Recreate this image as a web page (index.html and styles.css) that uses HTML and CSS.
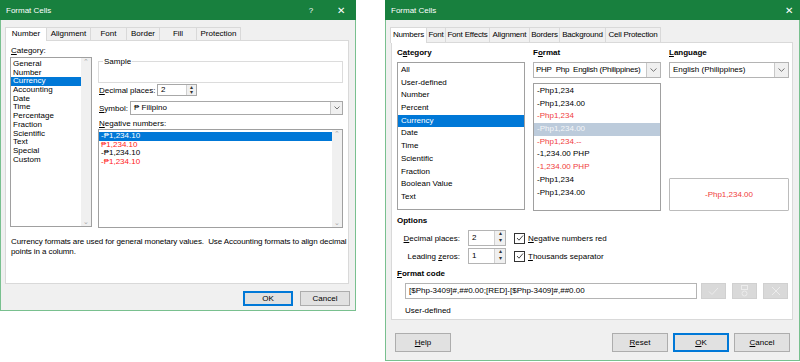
FILE: index.html
```html
<!DOCTYPE html>
<html lang="en">
<head>
  <meta charset="UTF-8" />
  <title>Format Cells</title>
  <link rel="stylesheet" href="styles.css">
</head>
<body>

  <!-- Excel dialog -->
  <div class="dlg xl">
    <div class="title">
      <span>Format Cells</span>
      <span class="ctl"><span class="q">?</span><span class="x">✕</span></span>
    </div>
    <div class="tabs">
      <div class="tab on" style="width:42px">Number</div>
      <div class="tab" style="width:45px">Alignment</div>
      <div class="tab" style="width:37px">Font</div>
      <div class="tab" style="width:34px">Border</div>
      <div class="tab" style="width:38px">Fill</div>
      <div class="tab" style="width:45px">Protection</div>
    </div>
    <div class="panel">
      <div class="xl-cols">
        <div>
          <div class="lbl"><u>C</u>ategory:</div>
          <div class="list cat-list">
            <div class="rows">
              <div>General</div>
              <div>Number</div>
              <div class="sel">Currency</div>
              <div>Accounting</div>
              <div>Date</div>
              <div>Time</div>
              <div>Percentage</div>
              <div>Fraction</div>
              <div>Scientific</div>
              <div>Text</div>
              <div>Special</div>
              <div>Custom</div>
            </div>
            <div class="sbar"><span>&#8963;</span><span>&#8964;</span></div>
          </div>
        </div>
        <div>
          <fieldset class="sample"><legend>Sample</legend></fieldset>
          <div class="field dec">
            <span class="flbl"><u>D</u>ecimal places:</span>
            <div class="spin"><span class="val">2</span><span class="arrows"><i>&#9652;</i><i>&#9662;</i></span></div>
          </div>
          <div class="field sym">
            <span class="flbl sym-lbl"><u>S</u>ymbol:</span>
            <div class="combo"><span class="val">₱ Filipino</span><span class="drop"><svg width="6" height="4" viewBox="0 0 6 4"><path d="M0.5 0.5 L3 3 L5.5 0.5" fill="none" stroke="#555" stroke-width="0.8"/></svg></span></div>
          </div>
          <div class="lbl neg-lbl"><u>N</u>egative numbers:</div>
          <div class="list neg-list">
            <div class="rows">
              <div class="sel">-₱1,234.10</div>
              <div class="red">₱1,234.10</div>
              <div>-₱1,234.10</div>
              <div class="red">-₱1,234.10</div>
            </div>
            <div class="sbar"><span>&#8963;</span><span>&#8964;</span></div>
          </div>
        </div>
      </div>
      <p class="desc">Currency formats are used for general monetary values.&nbsp; Use Accounting formats to align decimal<br>points in a column.</p>
    </div>
    <div class="btns">
      <button class="btn def">OK</button>
      <button class="btn">Cancel</button>
    </div>
  </div>

  <!-- LibreOffice dialog -->
  <div class="dlg lo">
    <div class="title">
      <span>Format Cells</span>
      <span class="ctl"><span class="x">✕</span></span>
    </div>
    <div class="tabs">
      <div class="tab on" style="width:37px">Numbers</div>
      <div class="tab" style="width:20px">Font</div>
      <div class="tab" style="width:45px">Font Effects</div>
      <div class="tab" style="width:41px">Alignment</div>
      <div class="tab" style="width:31px">Borders</div>
      <div class="tab" style="width:47px">Background</div>
      <div class="tab" style="width:56px">Cell Protection</div>
    </div>
    <div class="panel">
      <div class="lo-cols">
        <div>
          <div class="head">C<u>a</u>tegory</div>
          <div class="list lo-cat">
            <div>All</div>
            <div>User-defined</div>
            <div>Number</div>
            <div>Percent</div>
            <div class="sel">Currency</div>
            <div>Date</div>
            <div>Time</div>
            <div>Scientific</div>
            <div>Fraction</div>
            <div>Boolean Value</div>
            <div>Text</div>
          </div>
        </div>
        <div>
          <div class="head">F<u>o</u>rmat</div>
          <div class="combo lo-combo"><span class="val tight">PHP&nbsp; Php&nbsp; English (Philippines)</span><span class="drop"><svg width="7" height="4" viewBox="0 0 7 4"><path d="M0.5 0.5 L3.5 3.3 L6.5 0.5" fill="none" stroke="#555" stroke-width="0.8"/></svg></span></div>
          <div class="list lo-fmt">
            <div>-Php1,234</div>
            <div>-Php1,234.00</div>
            <div class="red">-Php1,234</div>
            <div class="hl">-Php1,234.00</div>
            <div class="red">-Php1,234.--</div>
            <div>-1,234.00 PHP</div>
            <div class="red">-1,234.00 PHP</div>
            <div>-Php1,234</div>
            <div>-Php1,234.00</div>
          </div>
        </div>
        <div>
          <div class="head"><u>L</u>anguage</div>
          <div class="combo lo-combo"><span class="val">English (Philippines)</span><span class="drop"><svg width="7" height="4" viewBox="0 0 7 4"><path d="M0.5 0.5 L3.5 3.3 L6.5 0.5" fill="none" stroke="#555" stroke-width="0.8"/></svg></span></div>
          <div class="preview">-Php1,234.00</div>
        </div>
      </div>

      <div class="head opt-head">Options</div>
      <div class="opts">
        <span class="olbl"><u>D</u>ecimal places:</span>
        <div class="spin lo-spin"><span class="val">2</span><span class="arrows"><i>&#9652;</i><i>&#9662;</i></span></div>
        <label class="chk"><span class="box"><svg width="8" height="8" viewBox="0 0 8 8"><path d="M1 4 L3 6.2 L7 1.5" fill="none" stroke="#333" stroke-width="0.9"/></svg></span><span><u>N</u>egative numbers red</span></label>
        <span class="olbl">Leading <u>z</u>eros:</span>
        <div class="spin lo-spin"><span class="val">1</span><span class="arrows"><i>&#9652;</i><i>&#9662;</i></span></div>
        <label class="chk"><span class="box"><svg width="8" height="8" viewBox="0 0 8 8"><path d="M1 4 L3 6.2 L7 1.5" fill="none" stroke="#333" stroke-width="0.9"/></svg></span><span><u>T</u>housands separator</span></label>
      </div>

      <div class="head code-head"><u>F</u>ormat code</div>
      <div class="code-row">
        <div class="code">[$Php-3409]#,##0.00;[RED]-[$Php-3409]#,##0.00</div>
        <span class="ibtn"><svg width="11" height="9" viewBox="0 0 11 9"><path d="M1 4.5 L4 7.5 L10 1" fill="none" stroke="#ececec" stroke-width="1"/></svg></span>
        <span class="ibtn"><svg width="9" height="12" viewBox="0 0 9 12"><rect x="1.5" y="0.5" width="6" height="4" fill="none" stroke="#ececec"/><circle cx="4.5" cy="8.5" r="2.5" fill="none" stroke="#ececec"/></svg></span>
        <span class="ibtn"><svg width="10" height="10" viewBox="0 0 10 10"><path d="M1 1 L9 9 M9 1 L1 9" fill="none" stroke="#ececec" stroke-width="1"/></svg></span>
      </div>
      <div class="ud">User-defined</div>
    </div>
    <div class="btns lo-btns">
      <button class="btn"><u>H</u>elp</button>
      <span class="spacer"></span>
      <button class="btn"><u>R</u>eset</button>
      <button class="btn def"><u>O</u>K</button>
      <button class="btn"><u>C</u>ancel</button>
    </div>
  </div>

</body>
</html>
```

FILE: styles.css
```css
* { box-sizing: border-box; }
body {
  margin: 0; background: #fff; display: flex; align-items: flex-start; gap: 29px;
  font-family: "Liberation Sans", Arial, sans-serif; font-size: 8px; color: #000;
}
u { text-decoration: underline; text-underline-offset: 1px; }

.dlg { background: #f0f0f0; border: 1px solid #79c08f; border-top: none; }
.xl { width: 356px; height: 311px; }
.lo { width: 415px; height: 361px; }

.title {
  height: 20px; margin: 0 -1px; background: #18803e; color: #fff;
  display: flex; align-items: center; justify-content: space-between;
  padding: 0 0 0 6px; font-size: 8px;
}
.ctl { display: flex; align-items: center; }
.ctl .q { width: 30px; text-align: center; font-size: 8px; }
.ctl .x { width: 30px; text-align: center; font-size: 10px; }
.lo .ctl .x { width: 22px; }

.tabs { display: flex; align-items: flex-end; margin-top: 7px; padding-left: 4px; height: 13px; }
.lo .tabs { height: 15px; }
.tab {
  height: 13px; border: 1px solid #d9d9d9; border-bottom: none; margin-right: -1px;
  background: #f0f0f0; text-align: center; line-height: 12px; white-space: nowrap;
}
.tab.on { background: #fff; height: 14px; position: relative; z-index: 1; margin-bottom: -1px; }
.lo .tab {
  height: 15px; line-height: 14px; display: flex; justify-content: center;
  letter-spacing: -0.2px; overflow: visible;
}
.lo .tab.on { height: 16px; }

.panel { background: #fff; border: 1px solid #d9d9d9; }
.xl .panel { margin: 0 6px 0 4px; height: 244px; padding: 5px 5px 0 4px; }
.lo .panel { margin: 0 6px 0 5px; height: 278px; padding: 5px 0 0 5px; }

/* excel */
.xl-cols { display: grid; grid-template-columns: 82px 245px; column-gap: 6px; }
.lbl { height: 9px; line-height: 9px; padding-left: 1px; }
.list { border: 1px solid #a0a0a0; background: #fff; }
.xl .list { display: flex; }
.xl .rows { flex: 1; padding-top: 2px; }
.xl .rows div { height: 8.7px; line-height: 8.7px; padding-left: 2px; white-space: nowrap; }
.xl .rows .sel { background: #0078d7; color: #fff; }
.cat-list { margin-top: 2px; height: 170px; }
.neg-list { margin-top: 1px; height: 99px; }
.sbar {
  width: 10px; background: #f0f0f0; display: flex; flex-direction: column;
  justify-content: space-between; align-items: center; color: #a6a6a6; font-size: 7px; line-height: 8px;
}
.red { color: #f22; }

.sample { margin: 11px 0 0; height: 26px; border: 1px solid #dcdcdc; padding: 0 4px; }
.sample legend { padding: 0 1px; line-height: 9px; }
.field { display: flex; align-items: center; padding-left: 1px; }
.dec { margin-top: 1px; height: 12px; }
.sym { margin-top: 5px; height: 14px; }
.flbl { width: 58px; }
.sym-lbl { width: 31px; }
.spin { display: flex; border: 1px solid #a8a8a8; background: #fff; }
.xl .spin { width: 40px; height: 12px; }
.spin .val { flex: 1; padding-left: 3px; line-height: 10px; }
.lo .spin .val { line-height: 14px; }
.arrows { width: 10px; display: flex; flex-direction: column; border-left: 1px solid #d0d0d0; background: #f0f0f0; }
.arrows i { flex: 1; font-style: normal; font-size: 6px; line-height: 5px; text-align: center; color: #333; }
.combo { flex: 1; display: flex; border: 1px solid #a8a8a8; background: #fff; height: 14px; }
.combo .val { flex: 1; padding-left: 3px; line-height: 12px; white-space: nowrap; overflow: hidden; }
.combo .tight { letter-spacing: -0.25px; padding-left: 2px; }
.drop {
  width: 12px; border-left: 1px solid #c8c8c8; background: #f0f0f0;
  display: flex; align-items: center; justify-content: center;
}
.neg-lbl { margin-top: 4px; padding-left: 1px; }
.desc { margin: 9px 0 0 1px; line-height: 9.5px; white-space: nowrap; letter-spacing: -0.1px; }

.btns { display: flex; justify-content: flex-end; gap: 7px; margin-top: 7px; padding-right: 5px; }
.btn {
  font: inherit; height: 15px; width: 50px; padding: 0; border: 1px solid #adadad;
  background: #e1e1e1; color: #000;
}
.btn.def { border-color: #0078d7; box-shadow: inset 0 0 0 1px #0078d7; }

/* libreoffice */
.lo-cols { display: grid; grid-template-columns: 128px 128px 120px; column-gap: 8px; }
.head { font-weight: bold; height: 10px; line-height: 10px; }
.lo-cat { margin-top: 4px; height: 148px; padding-top: 1px; }
.lo .list div { height: 12.7px; line-height: 12.7px; padding-left: 3px; white-space: nowrap; }
.lo-cat .sel { background: #0078d7; color: #fff; }
.lo-combo { flex: none; margin-top: 4px; height: 16px; border-color: #b4b4b4; }
.lo-combo .val { line-height: 14px; }
.lo-combo .drop { width: 14px; }
.lo-fmt { margin-top: 5px; height: 128px; padding-top: 1px; }
.lo-fmt .hl { background: #bccbdb; color: #f4f6f9; }
.lo .red { color: #f03c3c; }
.preview {
  margin-top: 100px; height: 33px; border: 1px solid #bcbcbc; border-radius: 1px;
  display: flex; align-items: center; justify-content: center; color: #f03c3c;
}

.opt-head { margin-top: 5px; }
.opts {
  display: grid; grid-template-columns: 62px 39px auto; column-gap: 8px; row-gap: 2px;
  margin-top: 4px; align-items: center;
}
.olbl { text-align: right; margin-right: -1px; }
.lo-spin { height: 16px; margin-left: 1px; border-color: #b4b4b4; }
.lo-spin .arrows { width: 11px; }
.chk { display: flex; align-items: center; gap: 3px; }
.box {
  width: 11px; height: 11px; border: 1px solid #333; background: #fff;
  display: flex; align-items: center; justify-content: center;
}
.code-head { margin-top: 5px; }
.code-row { display: flex; margin: 4px 0 0 8px; gap: 6px; }
.code {
  width: 292px; height: 16px; border: 1px solid #b4b4b4; line-height: 14px; padding-left: 3px;
  margin-right: -2px; white-space: nowrap;
}
.ibtn {
  width: 25px; height: 16px; background: #d9d9d9; border: 1px solid #d0d0d0;
  display: flex; align-items: center; justify-content: center;
}
.ud { margin: 7px 0 0 8px; height: 10px; line-height: 10px; }

.lo-btns { margin-top: 13px; padding: 0 9px 0 9px; gap: 5px; }
.lo-btns .spacer { flex: 1; }
.lo-btns .btn { width: 56px; height: 19px; }
```
